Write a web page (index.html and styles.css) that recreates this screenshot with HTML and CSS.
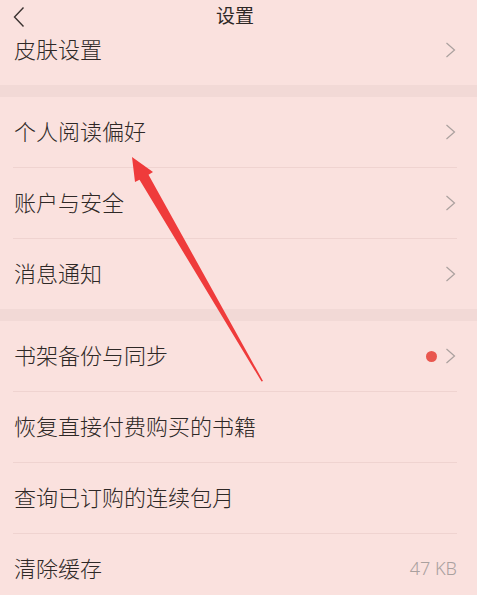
FILE: index.html
```html
<!DOCTYPE html>
<html lang="zh-CN">
<head>
<meta charset="utf-8">
<title>设置</title>
<link rel="stylesheet" href="styles.css">
</head>
<body>
<div class="page">
  <header class="header">
    <svg class="back" width="12" height="22" viewBox="0 0 12 22"><path d="M10.5 1.5 L1.5 11 L10.5 20.5" fill="none" stroke="#3a3230" stroke-width="1.4"/></svg>
    <div class="title">设置</div>
  </header>

  <section class="group">
    <div class="row first"><span class="label">皮肤设置</span><span class="right"><svg class="chev" width="11" height="16" viewBox="0 0 11 16"><path d="M1.5 1 L9.5 8 L1.5 15" fill="none" stroke="#aaa09e" stroke-width="1.2"/></svg></span></div>
  </section>
  <div class="band"></div>
  <section class="group">
    <div class="row"><span class="label">个人阅读偏好</span><span class="right"><svg class="chev" width="11" height="16" viewBox="0 0 11 16"><path d="M1.5 1 L9.5 8 L1.5 15" fill="none" stroke="#aaa09e" stroke-width="1.2"/></svg></span></div>
    <div class="row"><span class="label">账户与安全</span><span class="right"><svg class="chev" width="11" height="16" viewBox="0 0 11 16"><path d="M1.5 1 L9.5 8 L1.5 15" fill="none" stroke="#aaa09e" stroke-width="1.2"/></svg></span></div>
    <div class="row"><span class="label">消息通知</span><span class="right"><svg class="chev" width="11" height="16" viewBox="0 0 11 16"><path d="M1.5 1 L9.5 8 L1.5 15" fill="none" stroke="#aaa09e" stroke-width="1.2"/></svg></span></div>
  </section>
  <div class="band"></div>
  <section class="group">
    <div class="row"><span class="label">书架备份与同步</span><span class="right"><span class="dot"></span><svg class="chev" width="11" height="16" viewBox="0 0 11 16"><path d="M1.5 1 L9.5 8 L1.5 15" fill="none" stroke="#aaa09e" stroke-width="1.2"/></svg></span></div>
    <div class="row"><span class="label">恢复直接付费购买的书籍</span></div>
    <div class="row"><span class="label">查询已订购的连续包月</span></div>
    <div class="row"><span class="label">清除缓存</span><span class="right"><span class="value">47 KB</span></span></div>
  </section>

  <svg class="arrow" width="477" height="595" viewBox="0 0 477 595">
    <polygon points="132,157 153,172 148.5,174.8 263,381 261.5,381.5 139.5,179.8 135,182" fill="#ef3b3b"/>
  </svg>
</div>
</body>
</html>
```

FILE: styles.css
```css
html, body {
  margin: 0;
  padding: 0;
  background: #fae1de;
}
body {
  font-family: "Noto Sans CJK SC", "Noto Sans", sans-serif;
  color: #2e2826;
}
.page {
  position: relative;
  width: 477px;
  height: 595px;
  overflow: hidden;
  background: #fae1de;
}
.header {
  height: 34px;
  display: flex;
  align-items: center;
  justify-content: center;
  position: relative;
  padding-right: 7px;
}
.back {
  position: absolute;
  left: 13px;
  top: 6px;
}
.title {
  font-size: 19px;
  line-height: 30px;
  padding-bottom: 4px;
  font-weight: 400;
}
.group {
  display: flex;
  flex-direction: column;
}
.row {
  height: 70px;
  margin: 0 20px 0 13px;
  display: flex;
  align-items: center;
  justify-content: space-between;
  border-bottom: 1px solid #efd3d0;
}
.row:last-child {
  border-bottom: none;
}
.row.first {
  height: 51px;
  align-items: flex-start;
}
.row.first .label {
  line-height: 28px;
  padding-bottom: 0;
}
.row.first .right {
  height: 32px;
}
.label {
  font-size: 22px;
  font-weight: 300;
  line-height: 30px;
  padding-left: 1px;
  padding-bottom: 4px;
}
.right {
  display: flex;
  align-items: center;
  gap: 8px;
}
.chev {
  display: block;
  margin-right: 1px;
}
.dot {
  width: 11px;
  height: 11px;
  border-radius: 50%;
  background: #e9574f;
  display: block;
}
.value {
  font-family: "Noto Sans", sans-serif;
  font-size: 18px;
  font-weight: 300;
  color: #a9a09e;
  padding-bottom: 2px;
}
.band {
  height: 12px;
  background: #f2d9d6;
}
.arrow {
  position: absolute;
  left: 0;
  top: 0;
  pointer-events: none;
}
```
